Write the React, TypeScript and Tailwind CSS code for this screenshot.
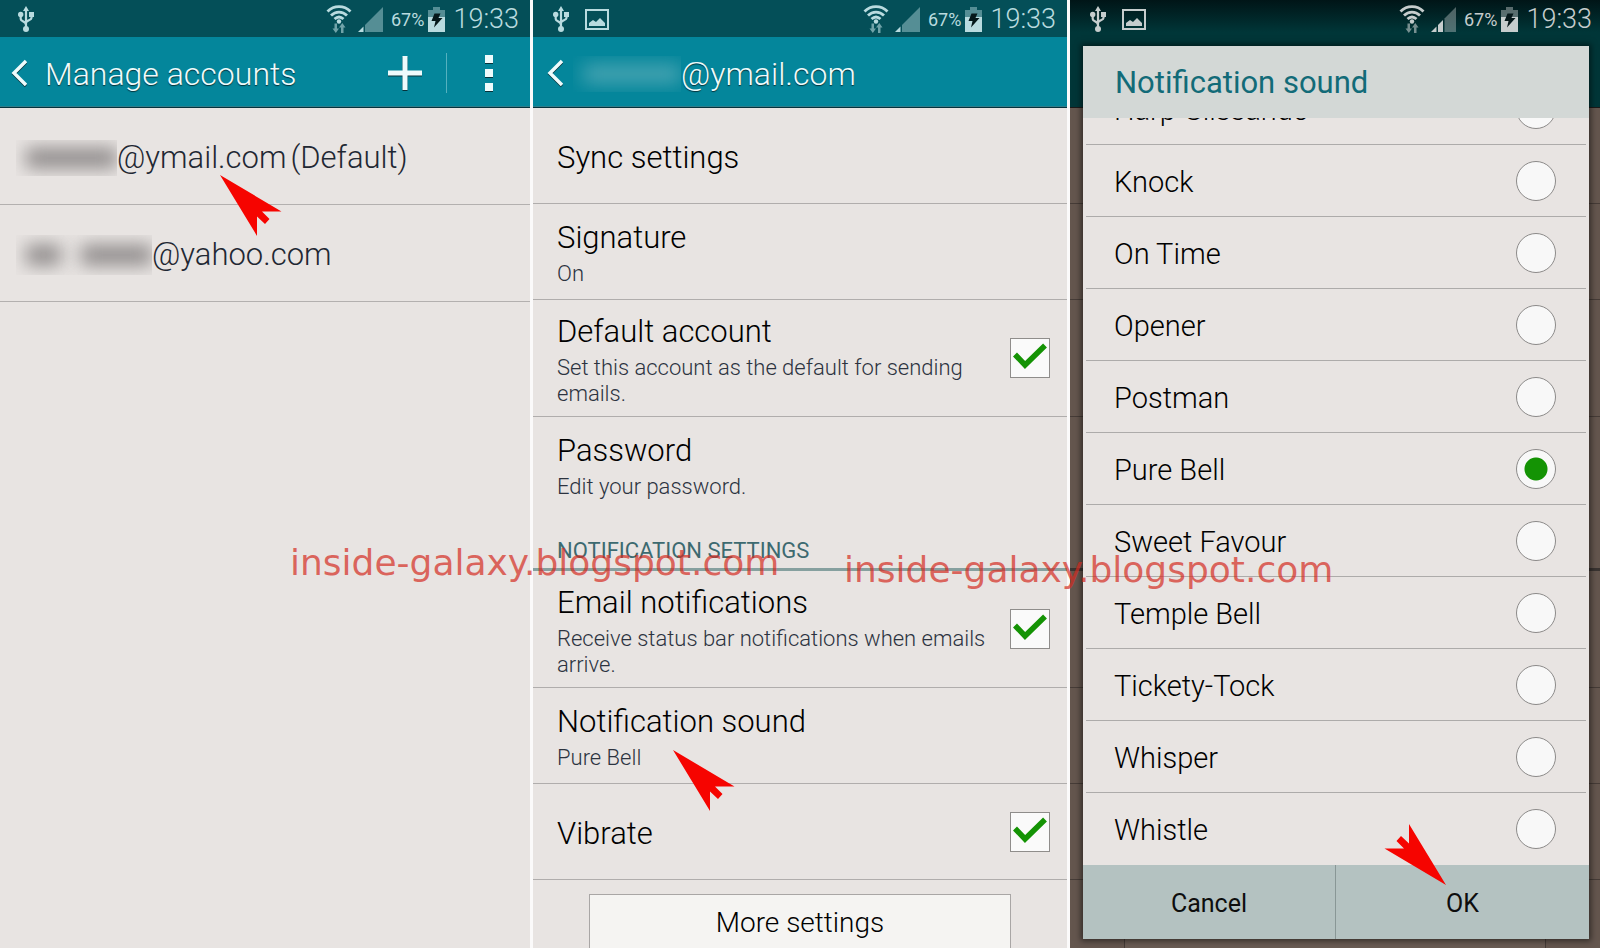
import { useState, type ReactNode } from "react";
import clsx from "clsx";

type ScreenTone = "teal" | "dim";

const SOUNDS = [
  "Harp Glissando",
  "Knock",
  "On Time",
  "Opener",
  "Postman",
  "Pure Bell",
  "Sweet Favour",
  "Temple Bell",
  "Tickety-Tock",
  "Whisper",
  "Whistle",
];

function UsbIcon() {
  return (
    <svg viewBox="0 0 16 26" className="h-[26px] w-4" fill="none" stroke="currentColor" strokeWidth="2.2">
      <path d="M8 4v18M2.7 9v4c0 2.500 5.300 2 5.300 6M13.500 9v3c0 2.500-5.500 2-5.500 5" />
      <path d="M8 0l3 5H5z" fill="currentColor" stroke="none" />
      <circle cx="2.700" cy="8.500" r="2.700" fill="currentColor" stroke="none" />
      <path d="M11 6h5v5h-5z" fill="currentColor" stroke="none" />
      <circle cx="8" cy="23" r="3" fill="currentColor" stroke="none" />
    </svg>
  );
}

function PictureIcon() {
  return (
    <svg viewBox="0 0 24 21" className="h-[21px] w-6">
      <path d="M1 1h22v19H1z" fill="none" stroke="currentColor" strokeWidth="2" />
      <path d="M4 17v-3l4-3 3 2 4-4 5 5v3z" fill="currentColor" />
    </svg>
  );
}

function WifiIcon() {
  return (
    <svg viewBox="0 0 26 28" className="h-7 w-[26px]" fill="none" stroke="currentColor">
      <path d="M1.500 6.500c6.500-6.500 16.500-6.500 23 0M5 10.500c4.600-4.600 11.400-4.600 16 0M8.500 14c2.800-2.600 6.200-2.600 9 0" strokeWidth="2.800" />
      <circle cx="13" cy="16.500" r="2.200" fill="currentColor" stroke="none" />
      <g className="opacity-60" fill="currentColor" stroke="none">
        <path d="M8.500 18.500H11v5h2L9.800 28 6.500 23.500h2z" />
        <path d="M15 28h2.500v-5.500h2L16.300 18 13 22.500h2z" />
      </g>
    </svg>
  );
}

function SignalIcon({ bars }: { bars: 1 | 2 }) {
  return (
    <svg viewBox="0 0 25 25" className="size-[25px]" fill="currentColor">
      <path d="M0 25l5.500-5.500V25z" />
      {bars === 2 ? (
        <>
          <path d="M7 18l5-5v12H7z" />
          <path d="M13.500 11.500L25 0v25H13.500z" className="opacity-40" />
        </>
      ) : (
        <path d="M7 18L25 0v25H7z" className="opacity-45" />
      )}
    </svg>
  );
}

function BatteryIcon() {
  return (
    <svg viewBox="0 0 17 25" className="h-[25px] w-[17px]">
      <path d="M5 0h7v3h5v7H0V3h5z" fill="currentColor" className="opacity-45" />
      <path d="M0 10h17v15H0z" fill="currentColor" />
      <path d="M6.500 6.500h6l-2 4.500h4L6 20.500l1.500-6.500H3.500z" fill="#05181a" />
    </svg>
  );
}

function StatusBar({ tone = "teal", picture = true, className }: { tone?: ScreenTone; picture?: boolean; className?: string }) {
  return (
    <div
      className={clsx(
        "flex h-[37px] items-center pt-px",
        tone === "teal" ? "bg-[#044f58] text-[#b9dbdf]" : "text-[#c6cdcd]",
        className,
      )}
    >
      <UsbIcon />
      {picture ? (
        <span className="ml-4">
          <PictureIcon />
        </span>
      ) : null}
      <div className="ml-auto flex items-center">
        <WifiIcon />
        <span className="ml-1.5">
          <SignalIcon bars={tone === "dim" ? 2 : 1} />
        </span>
        <span className="ml-2 text-[18px]">67%</span>
        <span className="ml-1">
          <BatteryIcon />
        </span>
        <span className="ml-2 text-[27px] leading-9 font-light">19:33</span>
      </div>
    </div>
  );
}

function AppBar({ children }: { children: ReactNode }) {
  return (
    <header className="flex h-[71px] items-center border-b border-[#05333d] bg-[#04869b] text-[#eefbfc] shadow-[inset_0_-1px_0_#2f7d8a]">
      {children}
    </header>
  );
}

function BackButton({ className }: { className?: string }) {
  return (
    <button type="button" aria-label="Back" className={clsx("shrink-0 pt-0.5", className)}>
      <svg viewBox="0 0 16 28" className="h-7 w-4 drop-shadow-[0_1px_0_#06333b]" fill="none" stroke="currentColor" strokeWidth="3.500">
        <path d="M15 2L3 14l12 12" />
      </svg>
    </button>
  );
}

// Smudge that hides the private part of an address.
function Redacted({ className, fill, words = 1 }: { className: string; fill: string; words?: 1 | 2 }) {
  return (
    <span aria-hidden="true" className={clsx("flex shrink-0 items-center gap-5 overflow-hidden pl-2.5", className)}>
      <span className={clsx("h-5 flex-1 blur-[9px]", fill)} />
      {words === 2 ? <span className={clsx("h-5 flex-2 blur-[9px]", fill)} /> : null}
    </span>
  );
}

function AccountRow({ smudge, words, address, note }: { smudge: string; words?: 1 | 2; address: string; note?: string }) {
  return (
    <li className="flex h-[97px] items-center border-b border-[#b3b0af] pt-1 pl-4 text-[31px] font-light text-[#1f2833]">
      <Redacted className={smudge} words={words} fill="bg-[#8d8989]" />
      <span>{address}</span>
      {note ? <span className="ml-1">{note}</span> : null}
    </li>
  );
}

function AccountsScreen() {
  return (
    <section className="flex flex-col bg-[#e8e4e2]">
      <StatusBar picture={false} className="pr-[11px] pl-[18px]" />
      <AppBar>
        <BackButton className="ml-[11px]" />
        <h1 className="ml-[18px] pt-1 text-[32px] font-light text-shadow-[0_1px_1px_#06333b]">Manage accounts</h1>
        <div className="ml-auto flex items-center pt-0.5">
          <button type="button" aria-label="Add account">
            <svg viewBox="0 0 34 34" className="size-[34px] drop-shadow-[0_1px_0_#06333b]" stroke="currentColor" strokeWidth="5">
              <path d="M17 0v34M0 17h34" />
            </svg>
          </button>
          <span className="ml-6 h-10 w-px bg-[#55b1bf]" />
          <button type="button" aria-label="More options" className="mr-[37px] ml-[38px] grid gap-1.5">
            <span className="size-2 bg-current shadow-[0_1px_0_#06333b]" />
            <span className="size-2 bg-current shadow-[0_1px_0_#06333b]" />
            <span className="size-2 bg-current shadow-[0_1px_0_#06333b]" />
          </button>
        </div>
      </AppBar>
      <ul>
        <AccountRow smudge="h-9 w-[101px]" address="@ymail.com" note="(Default)" />
        <AccountRow smudge="h-10 w-[136px]" words={2} address="@yahoo.com" />
      </ul>
    </section>
  );
}

function CheckBox({ id, defaultChecked }: { id: string; defaultChecked: boolean }) {
  return (
    <span className="grid shrink-0">
      <input
        id={id}
        type="checkbox"
        defaultChecked={defaultChecked}
        className="peer col-start-1 row-start-1 size-10 appearance-none border border-[#8f8d8b] bg-[#fafafa]"
      />
      <svg
        viewBox="0 0 40 40"
        className="pointer-events-none invisible col-start-1 row-start-1 size-10 peer-checked:visible"
        fill="none"
        stroke="#149304"
        strokeWidth="5.500"
      >
        <path d="M5 16.500l10 10.500L35 7.500" />
      </svg>
    </span>
  );
}

type SettingProps = { title: string; detail?: string; checkId?: string; tall?: boolean; noRule?: boolean };

function Setting({ title, detail, checkId, tall, noRule }: SettingProps) {
  const text = (
    <>
      <span className="block text-[31px] leading-9 font-light text-black">{title}</span>
      {detail ? <span className="mt-[5px] block text-[22px] leading-[26px] font-light text-[#2c333f]">{detail}</span> : null}
    </>
  );

  return (
    <li
      className={clsx(
        "flex items-center justify-between border-b pr-[17px] pl-6",
        tall ? "min-h-[117px]" : "min-h-24",
        noRule ? "border-transparent" : "border-[#b0adac]",
      )}
    >
      {checkId ? (
        <label htmlFor={checkId} className="max-w-[450px] pt-1">
          {text}
        </label>
      ) : (
        <button type="button" className="pt-1 text-left">
          {text}
        </button>
      )}
      {checkId ? <CheckBox id={checkId} defaultChecked /> : null}
    </li>
  );
}

function SettingsScreen() {
  return (
    <section className="flex flex-col bg-[#e8e4e2]">
      <StatusBar className="pr-[11px] pl-5" />
      <AppBar>
        <BackButton className="ml-3.5" />
        <h1 className="ml-[10px] flex items-center pt-1 text-[32px] font-light text-shadow-[0_1px_1px_#06333b]">
          <Redacted className="h-9 w-[108px]" fill="bg-[#45a3b1]" />
          @ymail.com
        </h1>
      </AppBar>
      <ul>
        <Setting title="Sync settings" />
        <Setting title="Signature" detail="On" />
        <Setting title="Default account" detail="Set this account as the default for sending emails." checkId="default-account" tall />
        <Setting title="Password" detail="Edit your password." noRule />
      </ul>
      <h2 className="flex h-[58px] items-end border-b-[3px] border-[#86a09f] pb-1 pl-6 text-[22px] leading-[26px] text-[#3d6a70]">
        NOTIFICATION SETTINGS
      </h2>
      <ul>
        <Setting title="Email notifications" detail="Receive status bar notifications when emails arrive." checkId="email-notifications" tall />
        <Setting title="Notification sound" detail="Pure Bell" />
        <Setting title="Vibrate" checkId="vibrate" />
      </ul>
      <button type="button" className="mx-14 mt-[14px] flex-1 border border-b-0 border-[#a9a6a5] bg-[#f5f4f2] pt-0.5 text-[28px] font-light text-black">
        More settings
      </button>
    </section>
  );
}

function SoundDialog() {
  const [sound, setSound] = useState("Pure Bell");

  return (
    <div
      role="dialog"
      aria-labelledby="sound-title"
      className="absolute top-[46px] right-[11px] bottom-[9px] left-[13px] flex flex-col bg-[#e8e4e2] shadow-[0_0_6px_2px_#00000080]"
    >
      <h2 id="sound-title" className="flex h-[72px] shrink-0 items-center bg-[#d3d8d6] pt-0.5 pl-8 text-[31px] text-[#126b78]">
        Notification sound
      </h2>
      <div className="flex min-h-0 flex-1 flex-col justify-end overflow-hidden px-[3px]">
        {SOUNDS.map((name) => (
          <label
            key={name}
            className="flex h-[72px] shrink-0 items-center justify-between border-b border-[#adabaa] pr-[30px] pl-7 text-[29px] font-light text-black last:border-b-0"
          >
            <span className="pt-1">{name}</span>
            <input
              type="radio"
              name="sound"
              checked={sound === name}
              onChange={() => setSound(name)}
              className="size-10 appearance-none rounded-full border border-[#8c8a89] bg-[#f8f8f8] checked:bg-[radial-gradient(circle,#149304_11px,#f8f8f8_12px)]"
            />
          </label>
        ))}
      </div>
      <div className="grid h-[74px] shrink-0 grid-cols-2 bg-[#b4c2c1] text-[25px] text-[#0d0d0d]">
        <button type="button" className="border-r border-[#899796] pt-1">
          Cancel
        </button>
        <button type="button" className="pt-1">
          OK
        </button>
      </div>
    </div>
  );
}

function SoundScreen() {
  return (
    <section className="relative flex flex-col bg-[#64564e]">
      <div className="h-[108px] border-b border-[#1c1a19] bg-linear-to-b from-[#001517] to-[#003638] to-30%">
        <StatusBar tone="dim" className="pr-2 pl-5" />
      </div>
      <div aria-hidden="true" className="flex flex-1 flex-col">
        <div className="h-24 border-b border-[#463c37]" />
        <div className="h-24 border-b border-[#463c37]" />
        <div className="h-[117px] border-b border-[#463c37]" />
        <div className="h-[154px] border-b-[3px] border-[#3a3431]" />
        <div className="h-[117px] border-b border-[#463c37]" />
        <div className="h-24 border-b border-[#463c37]" />
        <div className="h-24 border-b border-[#463c37]" />
        <div className="mx-[54px] mt-[14px] flex-1 border border-b-0 border-[#463c37] bg-[#695b53]" />
      </div>
      <SoundDialog />
    </section>
  );
}

function Pointer({ className }: { className: string }) {
  return (
    <svg viewBox="0 0 62 62" className={clsx("pointer-events-none absolute size-[62px]", className)} fill="#f60400">
      <path d="M0 0l61.500 36.500H42l7.500 7.500-4.500 5-8-7.500V61z" />
    </svg>
  );
}

function Watermark({ className }: { className: string }) {
  return (
    <p
      className={clsx(
        "pointer-events-none absolute font-['DejaVu_Sans',sans-serif] text-[36px] leading-10 whitespace-nowrap text-[#d42a20]/70",
        className,
      )}
    >
      inside-galaxy.blogspot.com
    </p>
  );
}

export default function App() {
  return (
    <main className="relative grid min-h-screen grid-cols-[530fr_534fr_530fr] gap-[3px] overflow-hidden bg-[#fbfafa] font-[Roboto,sans-serif]">
      <AccountsScreen />
      <SettingsScreen />
      <SoundScreen />
      <Watermark className="top-[543px] left-[290px]" />
      <Watermark className="top-[550px] left-[844px]" />
      <Pointer className="top-[175px] left-[220px]" />
      <Pointer className="top-[750px] left-[673px]" />
      <Pointer className="top-[823px] left-[1384px] rotate-180" />
    </main>
  );
}
